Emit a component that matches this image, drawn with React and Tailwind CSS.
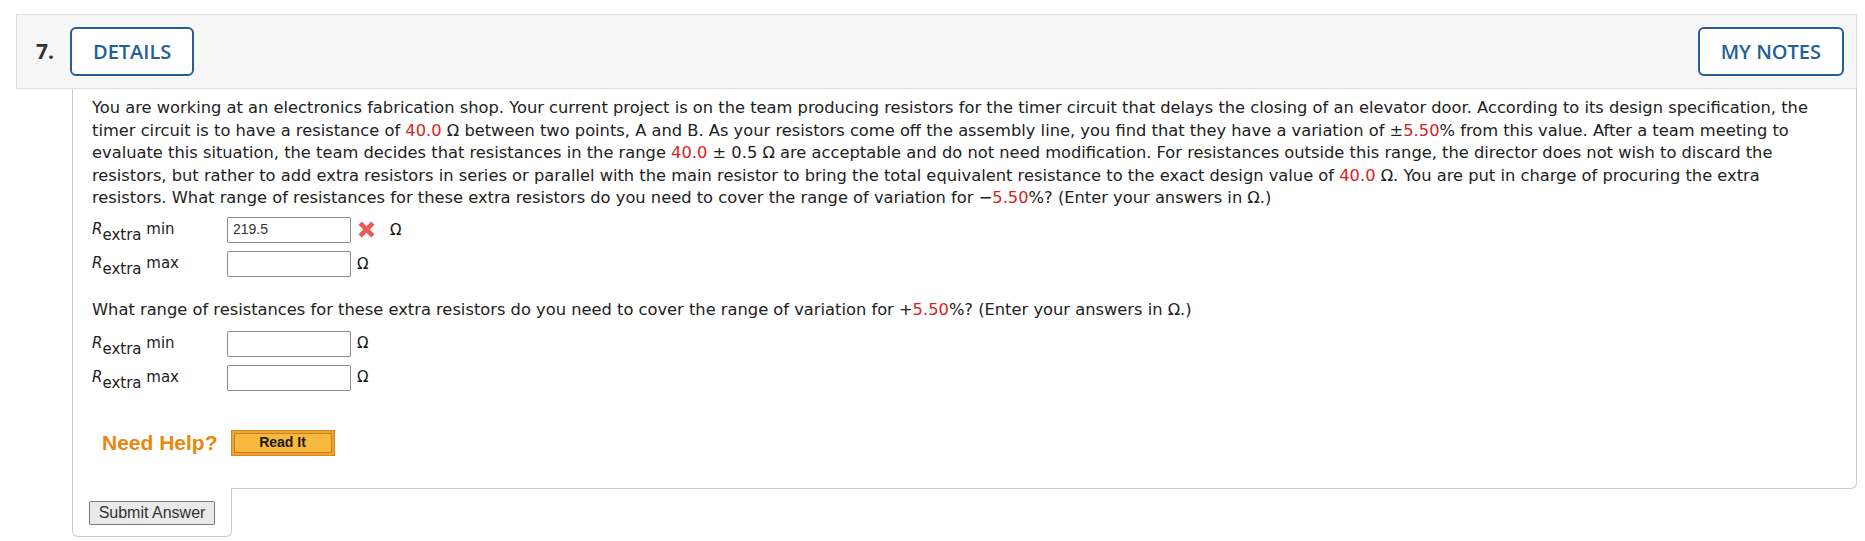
import React from "react";

const verdana = { fontFamily: '"DejaVu Sans", Verdana, sans-serif' };

function Red({ children }) {
  return <span className="text-[#d92323]">{children}</span>;
}

function RedX() {
  return (
    <svg width="19" height="19" viewBox="0 0 18 18" className="block">
      <path d="M3 3 L15 15 M15 3 L3 15" stroke="#ec5a5a" strokeWidth="4.4" strokeLinecap="butt" />
    </svg>
  );
}

function Row({ kind, value, wrong, className }) {
  return (
    <div className={"flex items-center h-[26px] " + (className || "")}>
      <div className="w-[135px] text-[15px] text-[#222] leading-none -mt-[1px]" style={verdana}>
        <span className="italic">R</span>
        <span className="relative top-[6px]">extra</span>
        <span> {kind}</span>
      </div>
      <div
        className="w-[124px] h-[26px] border border-[#8a8a8a] rounded-[2px] bg-white flex items-center pl-[5px] text-[14px] text-[#333]"
        style={{ fontFamily: '"Liberation Sans", Arial, sans-serif' }}
      >
        {value}
      </div>
      {wrong ? (
        <>
          <div className="ml-[6px]">
            <RedX />
          </div>
          <span className="ml-[14px] text-[15px] text-[#111]" style={verdana}>Ω</span>
        </>
      ) : (
        <span className="ml-[6px] text-[15px] text-[#111]" style={verdana}>Ω</span>
      )}
    </div>
  );
}

export default function App() {
  return (
    <div className="w-full h-[541px] bg-white pt-[14px] pl-[16px] pr-[8px] overflow-hidden">
      <div
        className="h-[75px] bg-[#f6f6f6] border border-[#dddddd] flex items-center justify-between pl-[19px] pr-[12px]"
        style={{ fontFamily: '"Open Sans", sans-serif' }}
      >
        <div className="flex items-center">
          <span className="text-[21px] font-bold text-[#333] w-[34px]">7.</span>
          <div className="h-[49px] px-[21px] border-2 border-[#245f99] rounded-[6px] flex items-center text-[20px] font-semibold text-[#245f99] bg-white">
            DETAILS
          </div>
        </div>
        <div className="h-[49px] px-[21px] border-2 border-[#245f99] rounded-[6px] flex items-center text-[20px] font-semibold text-[#245f99] bg-white">
          MY NOTES
        </div>
      </div>

      <div className="ml-[56px] border-l border-r border-b border-[#cccccc] rounded-br-[6px] pl-[19px] pt-[8px] pb-[32px]">
        <p className="text-[16.3px] leading-[22.6px] text-[#222] whitespace-nowrap" style={verdana}>
          You are working at an electronics fabrication shop. Your current project is on the team producing resistors for the timer circuit that delays the closing of an elevator door. According to its design specification, the
          <br />
          timer circuit is to have a resistance of <Red>40.0</Red> Ω between two points, A and B. As your resistors come off the assembly line, you find that they have a variation of ±<Red>5.50</Red>% from this value. After a team meeting to
          <br />
          evaluate this situation, the team decides that resistances in the range <Red>40.0</Red> ± 0.5 Ω are acceptable and do not need modification. For resistances outside this range, the director does not wish to discard the
          <br />
          resistors, but rather to add extra resistors in series or parallel with the main resistor to bring the total equivalent resistance to the exact design value of <Red>40.0</Red> Ω. You are put in charge of procuring the extra
          <br />
          resistors. What range of resistances for these extra resistors do you need to cover the range of variation for −<Red>5.50</Red>%? (Enter your answers in Ω.)
        </p>

        <Row kind="min" value="219.5" wrong className="mt-[7px]" />
        <Row kind="max" value="" className="mt-[8px]" />

        <p className="mt-[22px] text-[16.3px] leading-[22.6px] text-[#222] whitespace-nowrap" style={verdana}>
          What range of resistances for these extra resistors do you need to cover the range of variation for +<Red>5.50</Red>%? (Enter your answers in Ω.)
        </p>

        <Row kind="min" value="" className="mt-[9px]" />
        <Row kind="max" value="" className="mt-[8px]" />

        <div className="mt-[39px] ml-[10px] flex items-center h-[26px]">
          <span
            className="text-[21px] font-bold text-[#e8870e] leading-none"
            style={{ fontFamily: '"Liberation Sans", Arial, sans-serif' }}
          >
            Need Help?
          </span>
          <div className="ml-[13px] w-[104px] h-[26px] border border-[#d9861c] bg-[#eea234] p-[2px]">
            <div
              className="w-full h-full border border-[#c98020] bg-[#f6b93d] flex items-center justify-center text-[14px] font-bold text-[#1a1a1a]"
              style={{ fontFamily: '"Liberation Sans", Arial, sans-serif' }}
            >
              Read It
            </div>
          </div>
        </div>
      </div>

      <div className="ml-[56px] -mt-px w-[160px] h-[49px] bg-white border-l border-r border-b border-[#cccccc] rounded-b-[6px] pl-[16px] pt-[13px]">
        <div
          className="w-[126px] h-[24px] bg-[#e9e9e9] border border-[#7a7a7a] rounded-[2px] flex items-center justify-center text-[16px] text-[#333]"
          style={{ fontFamily: '"Liberation Sans", Arial, sans-serif' }}
        >
          Submit Answer
        </div>
      </div>
    </div>
  );
}
